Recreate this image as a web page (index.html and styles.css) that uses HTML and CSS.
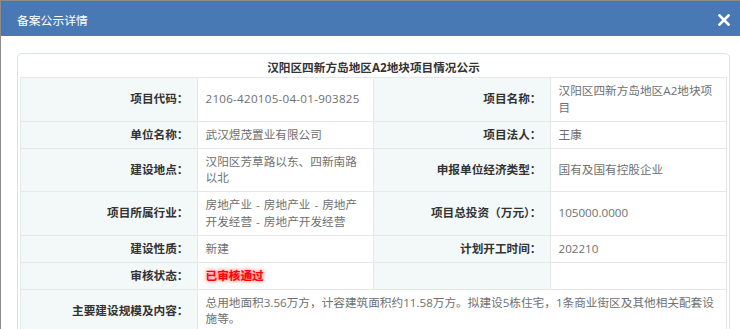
FILE: index.html
```html
<!DOCTYPE html>
<html lang="zh-CN">
<head>
<meta charset="utf-8">
<title>备案公示详情</title>
<link rel="stylesheet" href="styles.css">
</head>
<body>
<div class="dialog">
  <div class="dialog-head">
    <span class="dialog-title">备案公示详情</span>
    <span class="dialog-close" aria-label="关闭">
      <svg width="12" height="12" viewBox="0 0 12 12"><path d="M1.5 1.5 L10.5 10.5 M10.5 1.5 L1.5 10.5" stroke="#fff" stroke-width="2.6" stroke-linecap="square" fill="none"/></svg>
    </span>
  </div>
  <div class="dialog-body">
    <div class="panel">
      <div class="panel-title">汉阳区四新方岛地区A2地块项目情况公示</div>
      <table class="info">
        <colgroup><col class="c"><col class="c"><col class="c"><col class="c"></colgroup>
        <tbody>
          <tr>
            <th>项目代码：</th><td class="code">2106-420105-04-01-903825</td>
            <th>项目名称：</th><td>汉阳区四新方岛地区A2地块项目</td>
          </tr>
          <tr>
            <th>单位名称：</th><td>武汉煜茂置业有限公司</td>
            <th>项目法人：</th><td>王康</td>
          </tr>
          <tr>
            <th>建设地点：</th><td>汉阳区芳草路以东、四新南路以北</td>
            <th>申报单位经济类型：</th><td>国有及国有控股企业</td>
          </tr>
          <tr>
            <th>项目所属行业：</th><td>房地产业 - 房地产业 - 房地产开发经营 - 房地产开发经营</td>
            <th>项目总投资（万元）：</th><td>105000.0000</td>
          </tr>
          <tr>
            <th>建设性质：</th><td>新建</td>
            <th>计划开工时间：</th><td>202210</td>
          </tr>
          <tr>
            <th>审核状态：</th><td><span class="status">已审核通过</span></td>
            <th></th><td></td>
          </tr>
          <tr>
            <th>主要建设规模及内容：</th>
            <td colspan="3">总用地面积3.56万方，计容建筑面积约11.58万方。拟建设5栋住宅，1条商业街区及其他相关配套设施等。</td>
          </tr>
        </tbody>
      </table>
    </div>
  </div>
</div>
</body>
</html>
```
FILE: styles.css
```css
html, body {
  margin: 0;
  padding: 0;
}
body {
  background: #8c8c8c;
  width: 740px;
  height: 329px;
  overflow: hidden;
  font-family: "Open Sans", "Noto Sans CJK SC", sans-serif;
  font-size: 11.65px;
}
.dialog {
  margin: 1px 0 0 1px;
  width: 745px;
  height: 400px;
  background: #fff;
}
.dialog-head {
  height: 35px;
  background: #4879b5;
  display: flex;
  align-items: center;
  justify-content: space-between;
  padding: 2px 16px 0 16px;
  box-sizing: border-box;
}
.dialog-title {
  color: #fff;
  font-size: 11.8px;
}
.dialog-close {
  display: flex;
  width: 12px;
  height: 12px;
}
.dialog-body {
  padding: 17px 16px 0 16px;
}
.panel {
  border: 1px solid #d3e4f5;
  border-radius: 5px;
  padding: 0 2px 2px 2px;
}
.panel-title {
  text-align: center;
  font-weight: bold;
  color: #333;
  line-height: 17px;
  padding: 5px 0 1px 0;
}
.info {
  width: 100%;
  border-collapse: collapse;
  table-layout: fixed;
}
.info .c {
  width: 25%;
}
.info th,
.info td {
  border: 1px solid #e6e8e8;
  line-height: 16.5px;
  padding: 5px 8px 4.5px 8px;
  vertical-align: middle;
  word-break: break-all;
}
.info th {
  background: #f3f8f8;
  color: #333;
  font-weight: bold;
  text-align: right;
}
.info td {
  background: #fff;
  color: #6f6f6f;
  text-align: left;
  word-spacing: 1px;
}
.info td.code {
  letter-spacing: 0.25px;
}
.status {
  color: #f00;
  font-weight: bold;
  text-shadow: 0 0 4px rgba(255, 0, 0, 0.8);
}
```
